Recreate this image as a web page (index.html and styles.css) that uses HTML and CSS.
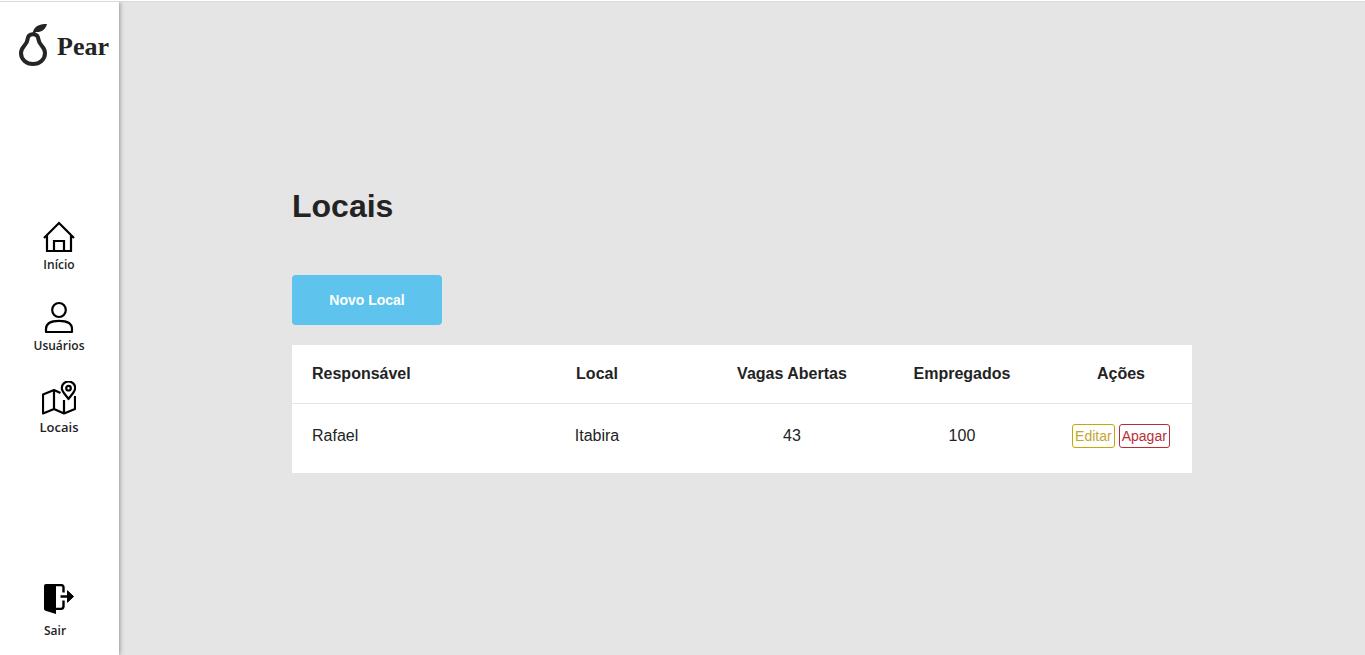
FILE: index.html
```html
<!DOCTYPE html>
<html lang="pt-BR">
<head>
<meta charset="utf-8">
<title>Pear - Locais</title>
<link rel="stylesheet" href="styles.css">
</head>
<body>
<div class="page">
  <aside class="sidebar">
    <a class="brand" href="#">
      <svg class="brand-icon" viewBox="0 0 28 42" aria-hidden="true">
        <path d="M14 10.300C10.500 10.300 8.800 12.500 8.500 15.500C8 21.500 2 22.500 2 29C2 35.500 7.300 40 14 40S26 35.500 26 29C26 22.500 20 21.500 19.500 15.500C19.200 12.500 17.500 10.300 14 10.300Z" fill="none" stroke="#232625" stroke-width="4"/>
        <path d="M13.500 9C15.500 2.500 19 0 28 0C26.500 6 22 8.500 17 8L14.500 10Z" fill="#232625"/>
      </svg>
      <span class="brand-name">Pear</span>
    </a>
    <nav class="menu">
      <a class="menu-item" href="#">
        <svg class="menu-icon" viewBox="0 0 34 34" fill="none" stroke="#000" stroke-width="2.200" aria-hidden="true">
          <path d="M2 19L17 4L32 19M5 16V32H29V16M12 32V22H22V32"/>
        </svg>
        Início
      </a>
      <a class="menu-item" href="#">
        <svg class="menu-icon" viewBox="0 0 34 34" fill="none" stroke="#000" stroke-width="2.200" aria-hidden="true">
          <ellipse cx="17" cy="10" rx="6.800" ry="7"/>
          <path d="M4 32V29C4 23.500 9 20.800 17 20.800S30 23.500 30 29V32Z" stroke-linejoin="round"/>
        </svg>
        Usuários
      </a>
      <a class="menu-item menu-item-current" href="#">
        <svg class="menu-icon" viewBox="0 0 34 34" fill="none" stroke="#000" stroke-width="2.200" stroke-linejoin="round" aria-hidden="true">
          <path d="M18.500 12L12 9L1 13.500V32.500L12 28L22 32.500L33 28V15M12 9V28M22 19V32.500"/>
          <path d="M26.500 18C24 14 19.800 11 19.800 7A6.700 6.500 0 0 1 33.200 7C33.200 11 29 14 26.500 18Z"/>
          <circle cx="26.500" cy="7.200" r="2.300"/>
        </svg>
        Locais
      </a>
    </nav>
    <a class="exit" href="#">
      <svg class="exit-icon" viewBox="0 0 30 30" aria-hidden="true">
        <path d="M2 0H12V30L1.500 26.800Q0 26.300 0 25V2Q0 0 2 0Z"/>
        <path d="M8 1.100H17Q19.500 1.100 19.500 3.500V8.500M19.500 16.500V22Q19.500 24.900 17 24.900H10M16.500 12.500H25" fill="none" stroke="#000" stroke-width="2.400"/>
        <path d="M23.500 6.800L29.500 12.500L23.500 18.200Z" stroke="#000" stroke-linejoin="round"/>
      </svg>
      Sair
    </a>
  </aside>
  <main class="content">
    <section class="panel">
      <h1 class="title">Locais</h1>
      <button class="new-button" type="button">Novo Local</button>
      <table class="places">
        <thead>
          <tr>
            <th class="col-owner" scope="col">Responsável</th>
            <th class="col-place" scope="col">Local</th>
            <th class="col-openings" scope="col">Vagas Abertas</th>
            <th class="col-staff" scope="col">Empregados</th>
            <th class="col-actions" scope="col">Ações</th>
          </tr>
        </thead>
        <tbody>
          <tr>
            <td class="col-owner">Rafael</td>
            <td>Itabira</td>
            <td>43</td>
            <td>100</td>
            <td>
              <div class="actions">
                <button class="action action-edit" type="button">Editar</button>
                <button class="action action-delete" type="button">Apagar</button>
              </div>
            </td>
          </tr>
        </tbody>
      </table>
    </section>
  </main>
</div>
</body>
</html>
```
FILE: styles.css
```css
* {
  box-sizing: border-box;
}

body {
  margin: 0;
  background: #fff;
  color: #232323;
  font-family: "Liberation Sans", Arial, sans-serif;
  font-size: 16px;
}

a {
  color: inherit;
  text-decoration: none;
}

button {
  font-family: inherit;
  font-size: 14px;
  cursor: pointer;
}

.page {
  display: flex;
  min-height: calc(100vh - 1px);
  margin-top: 1px;
  border-top: 1px solid #dadada;
}

.sidebar {
  display: flex;
  flex-direction: column;
  justify-content: space-between;
  flex: 0 0 119px;
  padding: 22px 0 16px;
  background: #fff;
  box-shadow: 0 0 5px rgba(0, 0, 0, 0.5);
  clip-path: inset(0 -8px 0 0);
  font-family: "Open Sans", "Noto Sans", sans-serif;
  font-size: 12px;
  font-weight: 600;
  line-height: 16px;
}

.brand {
  display: flex;
  align-items: center;
  gap: 10px;
  padding-left: 19px;
}

.brand-icon {
  width: 28px;
  height: 42px;
}

.brand-name {
  padding-top: 4px;
  font-family: "Liberation Serif", serif;
  font-size: 26px;
  font-weight: 700;
  line-height: 38px;
}

.menu {
  display: flex;
  flex-direction: column;
  gap: 27px;
  padding: 4px 1px 0 0;
}

.menu-item {
  display: flex;
  flex-direction: column;
  align-items: center;
  gap: 4px;
}

.menu-item-current {
  font-size: 13px;
}

.menu-icon {
  width: 34px;
  height: 34px;
}

.exit {
  display: flex;
  flex-direction: column;
  gap: 9px;
  padding-left: 44px;
}

.exit-icon {
  width: 30px;
  height: 30px;
}

.content {
  display: flex;
  flex: 1;
  align-items: center;
  justify-content: center;
  background: #e5e5e5;
}

.panel {
  width: 100%;
  max-width: 900px;
}

.title {
  margin: 0 0 46px;
  font-size: 32px;
  line-height: 45px;
}

.new-button {
  display: block;
  width: 150px;
  height: 50px;
  margin-bottom: 20px;
  border: 0;
  border-radius: 4px;
  background: #5ec4ed;
  color: #fff;
  font-weight: 700;
}

.places {
  width: 100%;
  table-layout: fixed;
  border-collapse: collapse;
  background: #fff;
  text-align: center;
  line-height: 18px;
}

.places th {
  padding: 20px 0;
  border-bottom: 1px solid #e5e5e5;
}

.places td {
  padding: 20px 0 25px;
}

.places .col-owner {
  width: 21.333%;
  padding-left: 20px;
  text-align: left;
}

.col-place {
  width: 25.111%;
}

.col-openings {
  width: 18.222%;
}

.col-staff {
  width: 19.556%;
}

.actions {
  display: flex;
  justify-content: center;
  gap: 4px;
}

.action {
  height: 24px;
  padding: 0 2px;
  border: 1px solid;
  border-radius: 3px;
  background: #fff;
}

.action-edit {
  border-color: #c5a800;
  color: #c5a72c;
}

.action-delete {
  border-color: #b82e37;
  color: #b82e37;
}
```
